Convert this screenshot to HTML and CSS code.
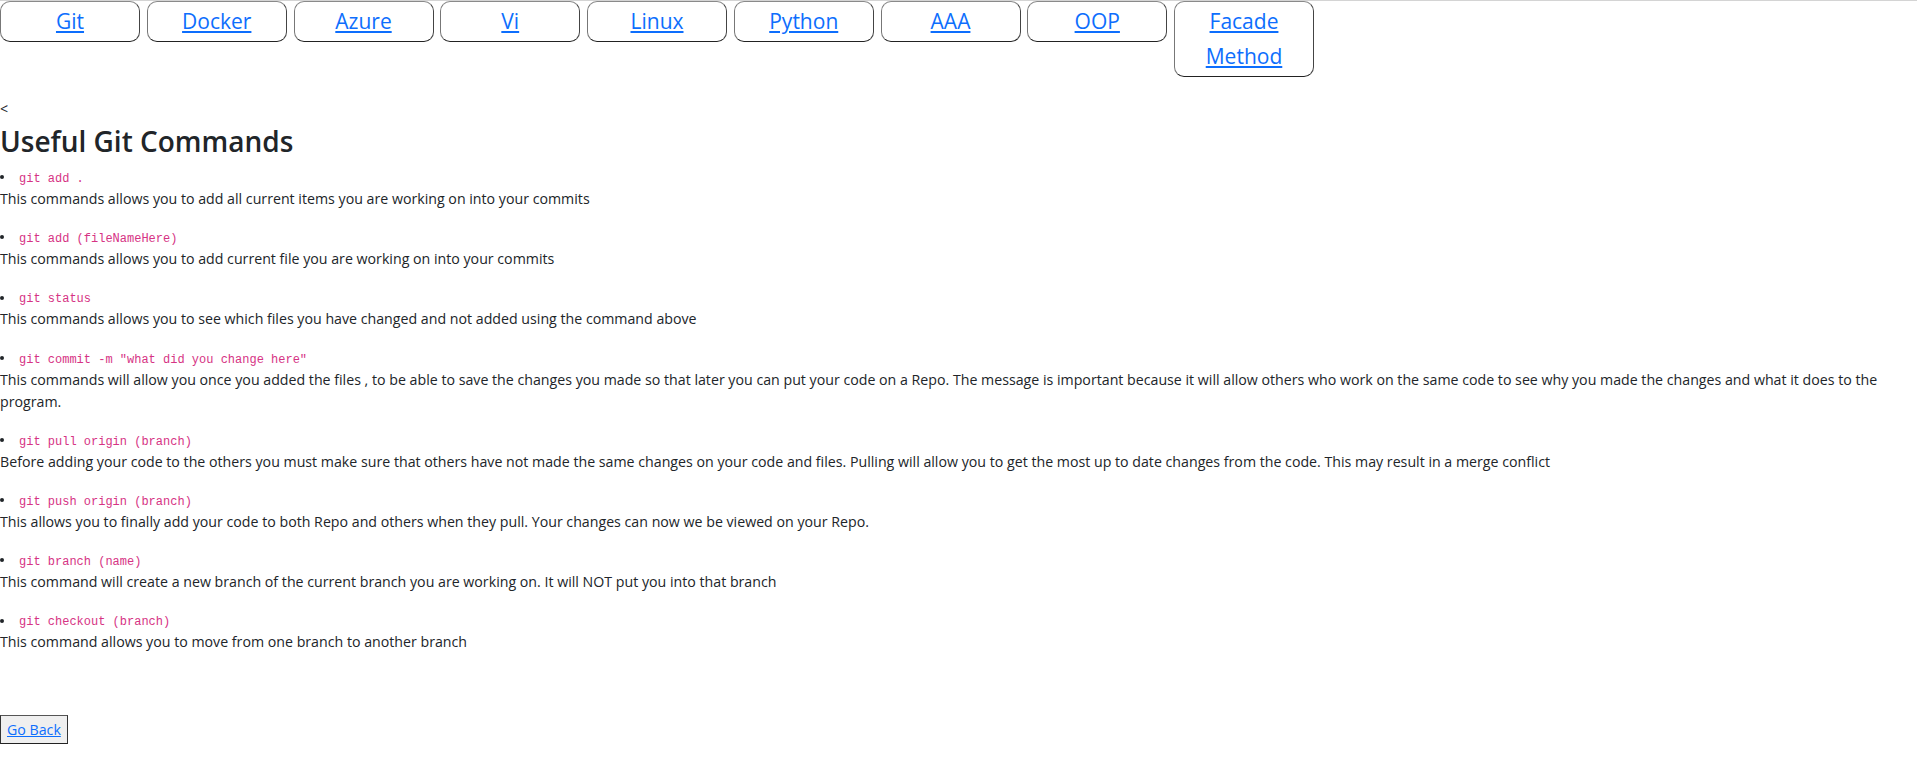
FILE: index.html
```html
<!DOCTYPE html>
<html lang="en">
<head>
<meta charset="utf-8">
<title>Useful Git Commands</title>
<link rel="stylesheet" href="styles.css">
</head>
<body>
<nav class="topnav">
  <div class="navbtn"><a href="#">Git</a></div>
  <div class="navbtn"><a href="#">Docker</a></div>
  <div class="navbtn"><a href="#">Azure</a></div>
  <div class="navbtn"><a href="#">Vi</a></div>
  <div class="navbtn"><a href="#">Linux</a></div>
  <div class="navbtn"><a href="#">Python</a></div>
  <div class="navbtn"><a href="#">AAA</a></div>
  <div class="navbtn"><a href="#">OOP</a></div>
  <div class="navbtn"><a href="#">Facade Method</a></div>
</nav>
<main class="content">
  <div class="stray">&lt;</div>
  <h2 class="title">Useful Git Commands</h2>

  <ul class="cmd"><li><code>git add .</code></li></ul>
  <p class="desc">This commands allows you to add all current items you are working on into your commits</p>

  <ul class="cmd"><li><code>git add (fileNameHere)</code></li></ul>
  <p class="desc">This commands allows you to add current file you are working on into your commits</p>

  <ul class="cmd"><li><code>git status</code></li></ul>
  <p class="desc">This commands allows you to see which files you have changed and not added using the command above</p>

  <ul class="cmd"><li><code>git commit -m "what did you change here"</code></li></ul>
  <p class="desc">This commands will allow you once you added the files , to be able to save the changes you made so that later you can put your code on a Repo. The message is important because it will allow others who work on the same code to see why you made the changes and what it does to the program.</p>

  <ul class="cmd"><li><code>git pull origin (branch)</code></li></ul>
  <p class="desc">Before adding your code to the others you must make sure that others have not made the same changes on your code and files. Pulling will allow you to get the most up to date changes from the code. This may result in a merge conflict</p>

  <ul class="cmd"><li><code>git push origin (branch)</code></li></ul>
  <p class="desc">This allows you to finally add your code to both Repo and others when they pull. Your changes can now we be viewed on your Repo.</p>

  <ul class="cmd"><li><code>git branch (name)</code></li></ul>
  <p class="desc">This command will create a new branch of the current branch you are working on. It will NOT put you into that branch</p>

  <ul class="cmd"><li><code>git checkout (branch)</code></li></ul>
  <p class="desc">This command allows you to move from one branch to another branch</p>

  <div class="actions">
    <button class="back" type="button"><a href="#">Go Back</a></button>
  </div>
</main>
</body>
</html>
```

FILE: styles.css
```css
html, body {
  margin: 0;
  padding: 0;
  background: #fff;
}

body {
  border-top: 1px solid #d4d4d4;
  font-family: "Open Sans", "Noto Sans", sans-serif;
  font-size: 14.2px;
  line-height: 22px;
  color: #212529;
}

a {
  color: #0d6efd;
  text-decoration: underline;
}

.topnav {
  display: flex;
  align-items: flex-start;
  gap: 6.75px;
}

.navbtn {
  box-sizing: border-box;
  width: 140px;
  padding: 2px 6px;
  border: 1px solid;
  border-color: #8a8a8a #444 #222 #777;
  border-radius: 10px;
  background: #fff;
  text-align: center;
  font-size: 21px;
  line-height: 35px;
}

.content {
  padding-top: 21px;
}

.stray {
  line-height: 22px;
}

.title {
  margin: 3px 0 7px;
  font-size: 28px;
  font-weight: 600;
  line-height: 36px;
}

.cmd {
  list-style: none;
  margin: 0;
  padding: 0;
  height: 22px;
}

.cmd li {
  height: 22px;
}

.cmd li::before {
  content: "";
  display: inline-block;
  width: 4px;
  height: 4px;
  margin: 0 15px 2px 0;
  border-radius: 50%;
  background: #212529;
  vertical-align: middle;
}

.cmd code {
  font-family: "Liberation Mono", "DejaVu Sans Mono", monospace;
  font-size: 12px;
  line-height: 1;
  color: #d63384;
}

.desc {
  margin: 0 0 16.2px;
}

.actions {
  padding-top: 45px;
}

.back {
  margin: 0;
  padding: 3px 6px 2px;
  border: 1px solid;
  border-color: #555 #333 #222 #333;
  border-radius: 0;
  background: #efefef;
  font-family: inherit;
  font-size: 14.2px;
  line-height: 22px;
}
```
